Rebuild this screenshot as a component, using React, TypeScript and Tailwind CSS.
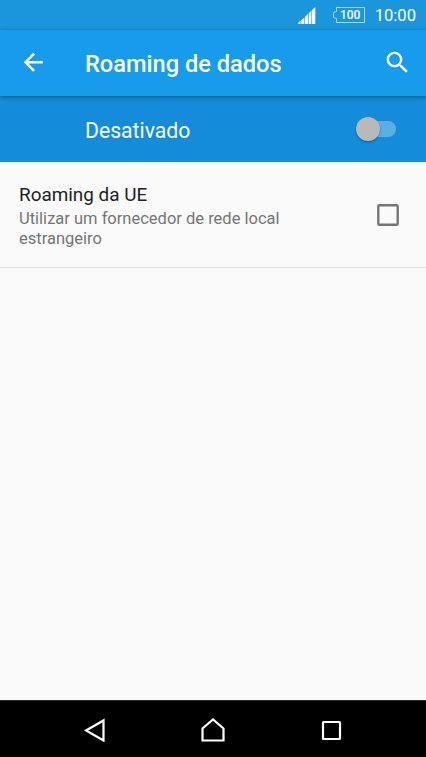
import { MdArrowBack, MdSearch } from 'react-icons/md';

const StatusBar = () => {
  return (
    <div className="flex h-[30px] shrink-0 items-center justify-end bg-[#1b96dc] pr-[10px] text-white">
      <svg width="18" height="18" viewBox="0 0 18 18" fill="#fff" className="mr-[17px] mt-px">
        <path d="M0 17V16L2.6 13.6V17ZM3.2 17V13.2L6.4 10.4V17ZM7 17V9.8L9.9 7V17ZM10.6 17V6.4L13.4 3.6V17ZM14.1 17V3L17.3 0V17Z" />
      </svg>
      <div className="relative mr-[10px] h-4 w-8">
        <svg width="32" height="16" viewBox="0 0 32 16" fill="none" stroke="#a9d8f5" className="block">
          <path d="M3.5 .5H31.5V15.5H3.5V11.5L.5 10.5V5.5L3.5 4.5Z" />
        </svg>
        <span className="absolute inset-0 flex items-center justify-center pl-[3px] text-[12px] font-medium leading-none">
          100
        </span>
      </div>
      <span className="mt-[3px] text-[16.6px] leading-none">10:00</span>
    </div>
  );
};

const AppBar = () => {
  return (
    <header className="z-10 flex h-[66px] shrink-0 items-center bg-[#169ceb] pl-[18.5px] pr-[14px] text-white shadow-[0_1px_4px_rgba(0,0,0,0.4)]">
      <MdArrowBack className="mb-px h-[28.5px] w-[28.5px]" />
      <h1 className="ml-[38px] mt-[3px] flex-1 text-[23.6px] font-medium leading-none">Roaming de dados</h1>
      <MdSearch className="mb-px h-[29px] w-[29px]" />
    </header>
  );
};

const MasterSwitch = () => {
  return (
    <div className="flex h-[66px] shrink-0 items-center justify-between bg-[#148cd9] pl-[85px] pr-[30px] text-white">
      <span className="mt-[3px] text-[21.2px] leading-none">Desativado</span>
      <div className="flex h-6 w-10 items-center">
        <span className="z-1 h-6 w-6 shrink-0 rounded-full bg-[#b9b9b9] shadow-[0_1px_2px_rgba(0,0,0,0.35)]" />
        <span className="-ml-3 h-4 w-7 shrink-0 rounded-r-full bg-[#5bafe4]" />
      </div>
    </div>
  );
};

const RoamingOption = () => {
  return (
    <div className="flex h-[106px] shrink-0 items-center justify-between border-b border-[#e1e1e1] pl-[19px] pr-[27px]">
      <div className="pt-[2px]">
        <p className="mb-[3px] text-[18.9px] leading-[23px] text-[#212121]">Roaming da UE</p>
        <p className="w-[290px] text-[16.5px] leading-[20px] text-[#757575]">
          Utilizar um fornecedor de rede local estrangeiro
        </p>
      </div>
      <svg width="22" height="22" viewBox="0 0 22 22" fill="none" stroke="#757575" strokeWidth="2.4">
        <rect x="1.3" y="1.3" width="19.4" height="19.4" rx="1" />
      </svg>
    </div>
  );
};

const NavigationBar = () => {
  return (
    <nav className="flex h-[57px] shrink-0 items-center justify-between border-t border-[#222] bg-black pl-[84px] pr-[83px] pt-[2px]">
      <svg width="22" height="24" viewBox="0 0 22 24" fill="none" stroke="#fff" strokeWidth="2.2">
        <path d="M2 12.5L19.5 2.5V22.5Z" />
      </svg>
      <svg width="24" height="24" viewBox="0 0 24 24" fill="none" stroke="#fff" strokeWidth="2.2" className="-ml-[2px]">
        <path d="M1.5 22.5V10.5L12 1.5L22.5 10.5V22.5Z" />
      </svg>
      <svg width="22" height="24" viewBox="0 0 22 24" fill="none" stroke="#fff" strokeWidth="2.2">
        <rect x="2" y="4" width="17" height="17" rx=".5" />
      </svg>
    </nav>
  );
};

const App = () => {
  return (
    <div className="flex h-[757px] w-[426px] flex-col overflow-hidden bg-[#fafafa] font-[Roboto,sans-serif]">
      <StatusBar />
      <AppBar />
      <MasterSwitch />
      <main className="flex-1">
        <RoamingOption />
      </main>
      <NavigationBar />
    </div>
  );
};

export default App;
